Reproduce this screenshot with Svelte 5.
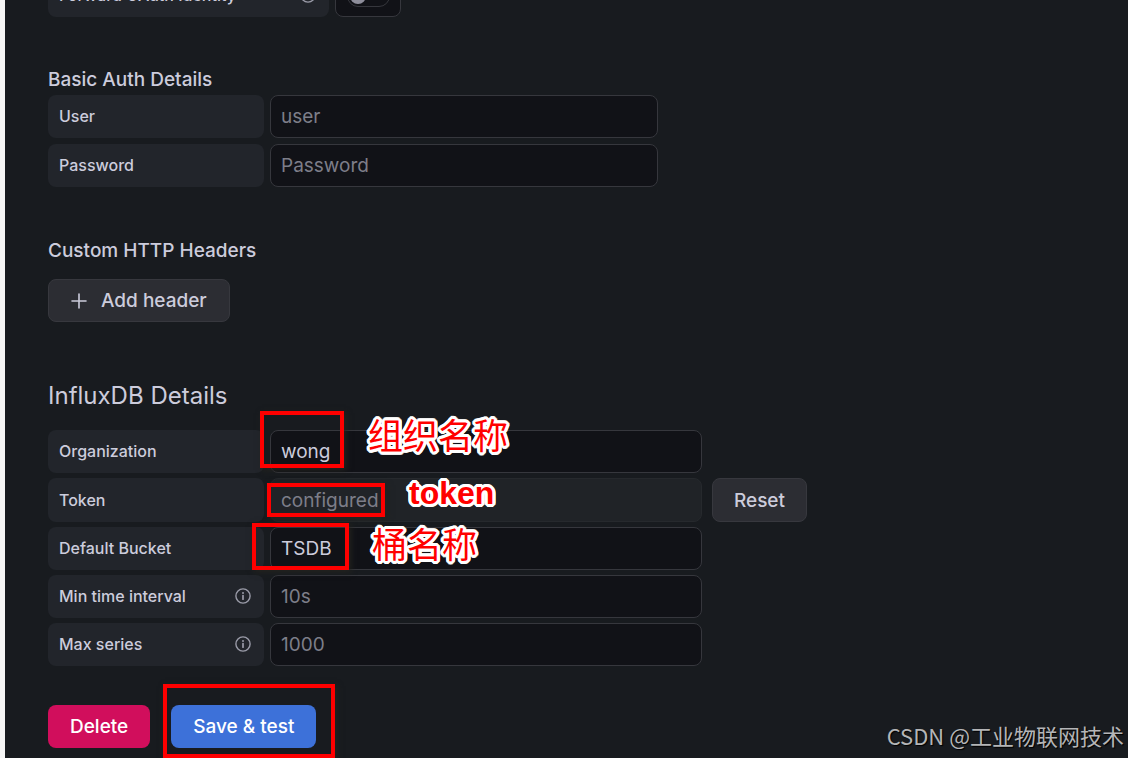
<script lang="ts">
	let forwardOauth = $state(false);
	let user = $state('');
	let password = $state('');
	let organization = $state('wong');
	let token = $state('');
	let bucket = $state('TSDB');
	let interval = $state('');
	let maxSeries = $state('');
	let tokenConfigured = $state(true);
</script>

{#snippet info()}
	<svg class="info" viewBox="0 0 16 16" aria-hidden="true">
		<circle cx="8" cy="8" r="7.1" fill="none" stroke="currentColor" stroke-width="1.4" />
		<path d="M8 7.6v3.6" stroke="currentColor" stroke-width="1.7" stroke-linecap="round" />
		<circle cx="8" cy="4.9" r="1" fill="currentColor" />
	</svg>
{/snippet}

<main class="page">
	<div class="row oauth">
		<label class="label wide" for="oauth">Forward OAuth Identity {@render info()}</label>
		<div class="switch-box">
			<input class="switch" id="oauth" type="checkbox" bind:checked={forwardOauth} />
		</div>
	</div>

	<section class="auth">
		<h6>Basic Auth Details</h6>
		<div class="rows auth-rows">
			<div class="row">
				<label class="label" for="user">User</label>
				<input class="field" id="user" type="text" placeholder="user" bind:value={user} />
			</div>
			<div class="row">
				<label class="label" for="password">Password</label>
				<input class="field" id="password" type="password" placeholder="Password" bind:value={password} />
			</div>
		</div>
	</section>

	<section class="headers">
		<h6>Custom HTTP Headers</h6>
		<button class="btn secondary add" type="button">
			<svg class="plus" viewBox="0 0 16 16" aria-hidden="true">
				<path d="M8 1v14M1 8h14" stroke="currentColor" stroke-width="1.6" stroke-linecap="round" />
			</svg>
			Add header
		</button>
	</section>

	<section class="influx">
		<h3>InfluxDB Details</h3>
		<div class="rows influx-rows">
			<div class="row">
				<label class="label" for="org">Organization</label>
				<input class="field" id="org" type="text" bind:value={organization} />
			</div>
			<div class="row token-row">
				<label class="label" for="token">Token</label>
				<input
					class="field"
					id="token"
					type="text"
					placeholder={tokenConfigured ? 'configured' : ''}
					disabled={tokenConfigured}
					bind:value={token}
				/>
				<button class="btn secondary reset" type="button" onclick={() => (tokenConfigured = false)}>Reset</button>
			</div>
			<div class="row">
				<label class="label" for="bucket">Default Bucket</label>
				<input class="field" id="bucket" type="text" bind:value={bucket} />
			</div>
			<div class="row">
				<label class="label" for="interval">Min time interval {@render info()}</label>
				<input class="field" id="interval" type="text" placeholder="10s" bind:value={interval} />
			</div>
			<div class="row">
				<label class="label" for="series">Max series {@render info()}</label>
				<input class="field" id="series" type="text" placeholder="1000" bind:value={maxSeries} />
			</div>
		</div>
	</section>

	<div class="actions">
		<button class="btn danger" type="button">Delete</button>
		<button class="btn primary" type="button">Save &amp; test</button>
	</div>

	<div class="mark mark-org"></div>
	<div class="mark mark-token"></div>
	<div class="mark mark-bucket"></div>
	<div class="mark mark-save"></div>
	<span class="note note-org">组织名称</span>
	<span class="note note-token">token</span>
	<span class="note note-bucket">桶名称</span>
	<span class="watermark">CSDN @工业物联网技术</span>
</main>

<style>
	:global(body) {
		background: #181b1f;
	}
	.page {
		position: relative;
		box-sizing: border-box;
		min-height: 100vh;
		overflow: hidden;
		padding: 0 43px 10px;
		border-left: 5px solid #f6f6f6;
		background: #181b1f;
		color: #ccccdc;
		font-family: Inter, 'Noto Sans CJK SC', sans-serif;
		font-size: 19px;
	}
	h3,
	h6 {
		margin: 0;
		font-size: 19px;
		font-weight: 500;
		line-height: 30px;
	}
	h3 {
		font-size: 24px;
		font-weight: 400;
		line-height: 32px;
	}
	.row {
		display: flex;
		gap: 6px;
		height: 43px;
	}
	.rows {
		display: grid;
	}
	.oauth {
		margin-top: -26px;
	}
	.auth {
		margin-top: 48px;
	}
	.auth-rows {
		gap: 6px;
		max-width: 610px;
	}
	.headers {
		margin-top: 49px;
	}
	.influx {
		margin-top: 58px;
	}
	.influx-rows {
		gap: 5px;
		max-width: 759px;
		margin-top: 18px;
	}
	.token-row {
		height: 44px;
	}
	.label {
		display: flex;
		flex: none;
		align-items: center;
		justify-content: space-between;
		box-sizing: border-box;
		width: 216px;
		padding: 0 13px 1px 11px;
		border-radius: 8px;
		background: #22252b;
		font-size: 16px;
		font-weight: 500;
	}
	.wide {
		width: 281px;
	}
	.info {
		width: 16px;
		height: 16px;
		color: #9a9ba8;
	}
	.field {
		flex: 1;
		box-sizing: border-box;
		min-width: 0;
		max-width: 432px;
		padding: 0 10px;
		border: 1px solid #36373d;
		border-radius: 8px;
		outline: none;
		background: #111217;
		color: #ccccdc;
		font: inherit;
	}
	.field::placeholder {
		color: #7d7e89;
		opacity: 1;
	}
	.field:focus {
		border-color: #3d71d9;
	}
	.field:disabled {
		border-color: #26292d;
		background: #202327;
	}
	.switch-box {
		display: flex;
		align-items: center;
		justify-content: center;
		box-sizing: border-box;
		width: 66px;
		border: 1px solid #36373d;
		border-radius: 8px;
		background: #111217;
	}
	.switch {
		appearance: none;
		display: flex;
		align-items: center;
		box-sizing: border-box;
		width: 43px;
		height: 22px;
		margin: 0;
		padding: 0 2px;
		border: 1px solid #36373d;
		border-radius: 11px;
		background: #111217;
	}
	.switch::before {
		content: '';
		width: 16px;
		height: 16px;
		border-radius: 50%;
		background: #8e8e9b;
	}
	.switch:checked {
		justify-content: flex-end;
		background: #3d71d9;
	}
	.btn {
		display: inline-flex;
		align-items: center;
		justify-content: center;
		box-sizing: border-box;
		height: 43px;
		padding: 0 21px;
		border: 1px solid transparent;
		border-radius: 8px;
		color: #fff;
		font: inherit;
		font-weight: 500;
		white-space: nowrap;
		cursor: pointer;
	}
	.secondary {
		border-color: #37383e;
		background: #2c2d33;
		color: #ccccdc;
	}
	.add {
		gap: 14px;
		margin-top: 13px;
		padding: 0 22px;
	}
	.plus {
		width: 16px;
		height: 16px;
	}
	.reset {
		height: 44px;
		margin-left: 4px;
	}
	.danger {
		background: #d10e5c;
	}
	.primary {
		background: #3d71d9;
	}
	.actions {
		display: flex;
		gap: 21px;
		margin-top: 39px;
	}
	/* callouts drawn over the form */
	.mark {
		position: absolute;
		box-sizing: border-box;
		border: 4px solid #f00;
		box-shadow: 2px 2px 6px #24241f;
		pointer-events: none;
	}
	.mark-org {
		top: 411px;
		left: 255px;
		width: 84px;
		height: 57px;
	}
	.mark-token {
		top: 483px;
		left: 262px;
		width: 118px;
		height: 34px;
	}
	.mark-bucket {
		top: 523px;
		left: 247px;
		width: 97px;
		height: 47px;
	}
	.mark-save {
		top: 684px;
		left: 158px;
		width: 172px;
		height: 74px;
	}
	.note {
		position: absolute;
		color: #f00;
		font-family: 'Liberation Sans', 'Noto Sans CJK SC', sans-serif;
		font-size: 35px;
		font-weight: 400;
		line-height: 40px;
		white-space: nowrap;
		text-shadow:
			3px 0 #fff,
			-3px 0 #fff,
			0 3px #fff,
			0 -3px #fff,
			2px 2px #fff,
			-2px 2px #fff,
			2px -2px #fff,
			-2px -2px #fff,
			3px 1px #fff,
			3px -1px #fff,
			-3px 1px #fff,
			-3px -1px #fff,
			1px 3px #fff,
			-1px 3px #fff,
			1px -3px #fff,
			-1px -3px #fff;
		pointer-events: none;
	}
	.note-org {
		top: 417px;
		left: 363px;
	}
	.note-token {
		top: 473px;
		left: 404px;
		font-size: 32px;
		font-weight: 700;
	}
	.note-bucket {
		top: 526px;
		left: 367px;
	}
	.watermark {
		position: absolute;
		right: 4px;
		bottom: 7px;
		color: #b4b5b7;
		font-family: 'Noto Sans CJK SC', sans-serif;
		font-size: 22px;
		font-weight: 400;
		line-height: 32px;
		text-shadow: 1px 1px 1px #000;
	}
</style>
